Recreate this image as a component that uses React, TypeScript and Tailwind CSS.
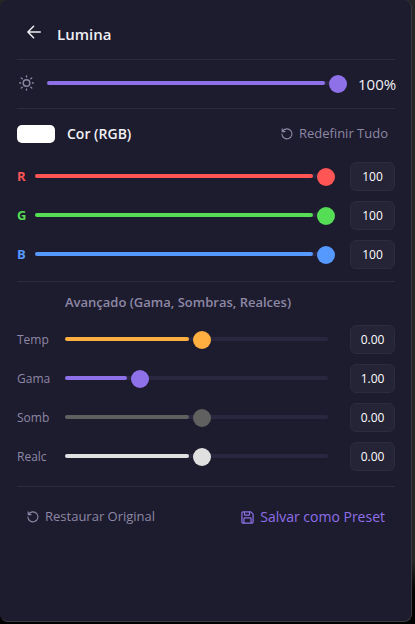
import { useState } from "react";

type SliderProps = {
  label: string;
  value: number;
  min?: number;
  max: number;
  step?: number;
  color: string;
  onChange: (value: number) => void;
};

// The knob keeps a small gap after the filled part, so the input is shifted over the track
function Slider({ label, value, min = 0, max, step = 1, color, onChange }: SliderProps) {
  const ratio = (value - min) / (max - min);

  return (
    <div className="relative mb-0.5 h-1 flex-1 rounded-full bg-[#2a2640]" style={{ color }}>
      <div
        className="h-1 rounded-full bg-current"
        style={{ width: `calc((100% - 15px) * ${ratio})` }}
      />
      <input
        type="range"
        aria-label={label}
        min={min}
        max={max}
        step={step}
        value={value}
        onChange={(e) => onChange(Number(e.target.value))}
        className="absolute -top-1.5 -right-[7px] left-1 h-[18px] w-[calc(100%+3px)] cursor-pointer appearance-none bg-transparent [&::-webkit-slider-thumb]:size-[18px] [&::-webkit-slider-thumb]:appearance-none [&::-webkit-slider-thumb]:rounded-full [&::-webkit-slider-thumb]:bg-current"
      />
    </div>
  );
}

type ValueBoxProps = { label: string; text: string; onChange: (value: number) => void };

function ValueBox({ label, text, onChange }: ValueBoxProps) {
  return (
    <input
      type="text"
      inputMode="decimal"
      aria-label={label}
      value={text}
      onChange={(e) => {
        const next = Number(e.target.value);
        if (!Number.isNaN(next)) onChange(next);
      }}
      className="h-[29px] w-[45px] rounded-md border border-[#2d2b3d] bg-[#252336] text-center text-xs font-medium text-white outline-none"
    />
  );
}

function ResetIcon() {
  return (
    <svg viewBox="0 0 12 12" className="size-3" fill="none" stroke="currentColor" strokeWidth="1.1" strokeLinecap="round" strokeLinejoin="round">
      <path d="M1.2.8v2.8H4M1.6 3.3A5 5 0 1 1 .9 6" />
    </svg>
  );
}

const channels = [
  { id: "R", color: "#ff5555", text: "text-[#ff5555]" },
  { id: "G", color: "#55dd55", text: "text-[#55dd55]" },
  { id: "B", color: "#5599ff", text: "text-[#5599ff]" },
];

const adjustments = [
  { id: "Temp", min: -1, max: 1, color: "#ffaf40" },
  { id: "Gama", min: 0, max: 4, color: "#8e70e8" },
  { id: "Somb", min: -1, max: 1, color: "#606060" },
  { id: "Realc", min: -1, max: 1, color: "#e0e0e0" },
];

const defaultRgb: Record<string, number> = { R: 100, G: 100, B: 100 };
const defaultAdvanced: Record<string, number> = { Temp: 0, Gama: 1, Somb: 0, Realc: 0 };

export default function App() {
  const [brightness, setBrightness] = useState(100);
  const [rgb, setRgb] = useState(defaultRgb);
  const [advanced, setAdvanced] = useState(defaultAdvanced);

  const resetColor = () => setRgb(defaultRgb);
  const restoreAll = () => {
    setBrightness(100);
    setRgb(defaultRgb);
    setAdvanced(defaultAdvanced);
  };

  return (
    <div className="flex min-h-screen bg-gradient-to-b from-[#262626] from-90% to-black to-98% pr-[3px] pb-0.5 font-['Open_Sans','Noto_Sans',sans-serif]">
      <main className="flex-1 rounded-lg border-r border-b border-[#3c3c40] bg-[#1d1b2e] pr-4 pl-[17px] text-[#f0f0f4]">
        {/* Header */}
        <header className="flex h-[60px] items-end gap-4 border-b border-[#2d2b3d] pb-[15px] pl-2.5">
          <button type="button" aria-label="Voltar" className="pb-[5px]">
            <svg viewBox="0 0 14 14" className="size-3.5" fill="none" stroke="currentColor" strokeWidth="1.5" strokeLinecap="round" strokeLinejoin="round">
              <path d="M13.3 7H.9M6.6 1.2.9 7l5.7 5.8" />
            </svg>
          </button>
          <h1 className="text-[15px] leading-5 font-semibold">Lumina</h1>
        </header>

        {/* Brightness */}
        <section className="flex h-[49px] items-center border-b border-[#2d2b3d]">
          <svg viewBox="0 0 16 16" className="mr-3 mb-0.5 ml-0.5 size-4 text-[#8d88a5]" fill="none" stroke="currentColor" strokeWidth="1.4" strokeLinecap="round">
            <circle cx="7.5" cy="8" r="3.3" />
            <path d="M7.5 1v.9M7.5 14.1v.9M.7 8h.9M13.4 8h.9M2.3 3l.9.7M11.8 12.3l.9.7M2.3 13l.9-.7M11.8 3.7l.9-.7" />
          </svg>
          <Slider label="Brilho" value={brightness} max={100} color="#8e70e8" onChange={setBrightness} />
          <output className="ml-[18px] w-[37px] text-[15px]">{brightness}%</output>
        </section>

        {/* Color */}
        <section className="border-b border-[#2d2b3d] pb-3">
          <div className="flex h-[49px] items-center">
            <input
              type="color"
              aria-label="Cor"
              defaultValue="#ffffff"
              className="h-[18px] w-[38px] appearance-none overflow-hidden rounded-[5px] bg-white [&::-webkit-color-swatch]:border-0 [&::-webkit-color-swatch-wrapper]:p-0"
            />
            <h2 className="ml-3 text-sm font-semibold">Cor (RGB)</h2>
            <button type="button" onClick={resetColor} className="mr-[7px] ml-auto flex items-center gap-1.5 text-[13px] text-[#8d88a5]">
              <ResetIcon />
              Redefinir Tudo
            </button>
          </div>
          <div className="mt-1 flex flex-col gap-2.5">
            {channels.map((c) => (
              <div key={c.id} className="flex items-center">
                <span className={`w-[18px] text-[13px] font-bold ${c.text}`}>{c.id}</span>
                <Slider label={c.id} value={rgb[c.id]} max={100} color={c.color} onChange={(v) => setRgb({ ...rgb, [c.id]: v })} />
                <div className="ml-[22px] flex">
                  <ValueBox label={`Valor ${c.id}`} text={String(rgb[c.id])} onChange={(v) => setRgb({ ...rgb, [c.id]: v })} />
                </div>
              </div>
            ))}
          </div>
        </section>

        {/* Advanced */}
        <section className="border-b border-[#2d2b3d] pb-[15px]">
          <h2 className="ml-12 flex h-[43px] items-center pb-0.5 text-[13px] font-semibold text-[#8d88a5]">
            Avançado (Gama, Sombras, Realces)
          </h2>
          <div className="flex flex-col gap-2.5">
            {adjustments.map((a) => (
              <div key={a.id} className="flex items-center">
                <span className="w-12 text-xs text-[#8d88a5]">{a.id}</span>
                <Slider label={a.id} value={advanced[a.id]} min={a.min} max={a.max} step={0.01} color={a.color} onChange={(v) => setAdvanced({ ...advanced, [a.id]: v })} />
                <div className="ml-[22px] flex">
                  <ValueBox label={`Valor ${a.id}`} text={advanced[a.id].toFixed(2)} onChange={(v) => setAdvanced({ ...advanced, [a.id]: v })} />
                </div>
              </div>
            ))}
          </div>
        </section>

        {/* Actions */}
        <footer className="flex h-[60px] items-center justify-between px-2.5">
          <button type="button" onClick={restoreAll} className="flex items-center gap-1.5 text-[13px] text-[#8d88a5]">
            <ResetIcon />
            Restaurar Original
          </button>
          <button type="button" className="flex items-center gap-1.5 text-sm text-[#8e70e8]">
            <svg viewBox="0 0 13 13" className="size-[13px]" fill="none" stroke="currentColor" strokeWidth="1.2" strokeLinejoin="round">
              <path d="M2 .9h7.8l2.3 2.3V11a1.1 1.1 0 0 1-1.1 1.1H2A1.1 1.1 0 0 1 .9 11V2A1.1 1.1 0 0 1 2 .9zM3.5.9v2.6a.7.7 0 0 0 .7.7h3.6a.7.7 0 0 0 .7-.7V.9M2.9 12.1V7.7a.8.8 0 0 1 .8-.8h5.6a.8.8 0 0 1 .8.8v4.4" />
            </svg>
            Salvar como Preset
          </button>
        </footer>
      </main>
    </div>
  );
}
